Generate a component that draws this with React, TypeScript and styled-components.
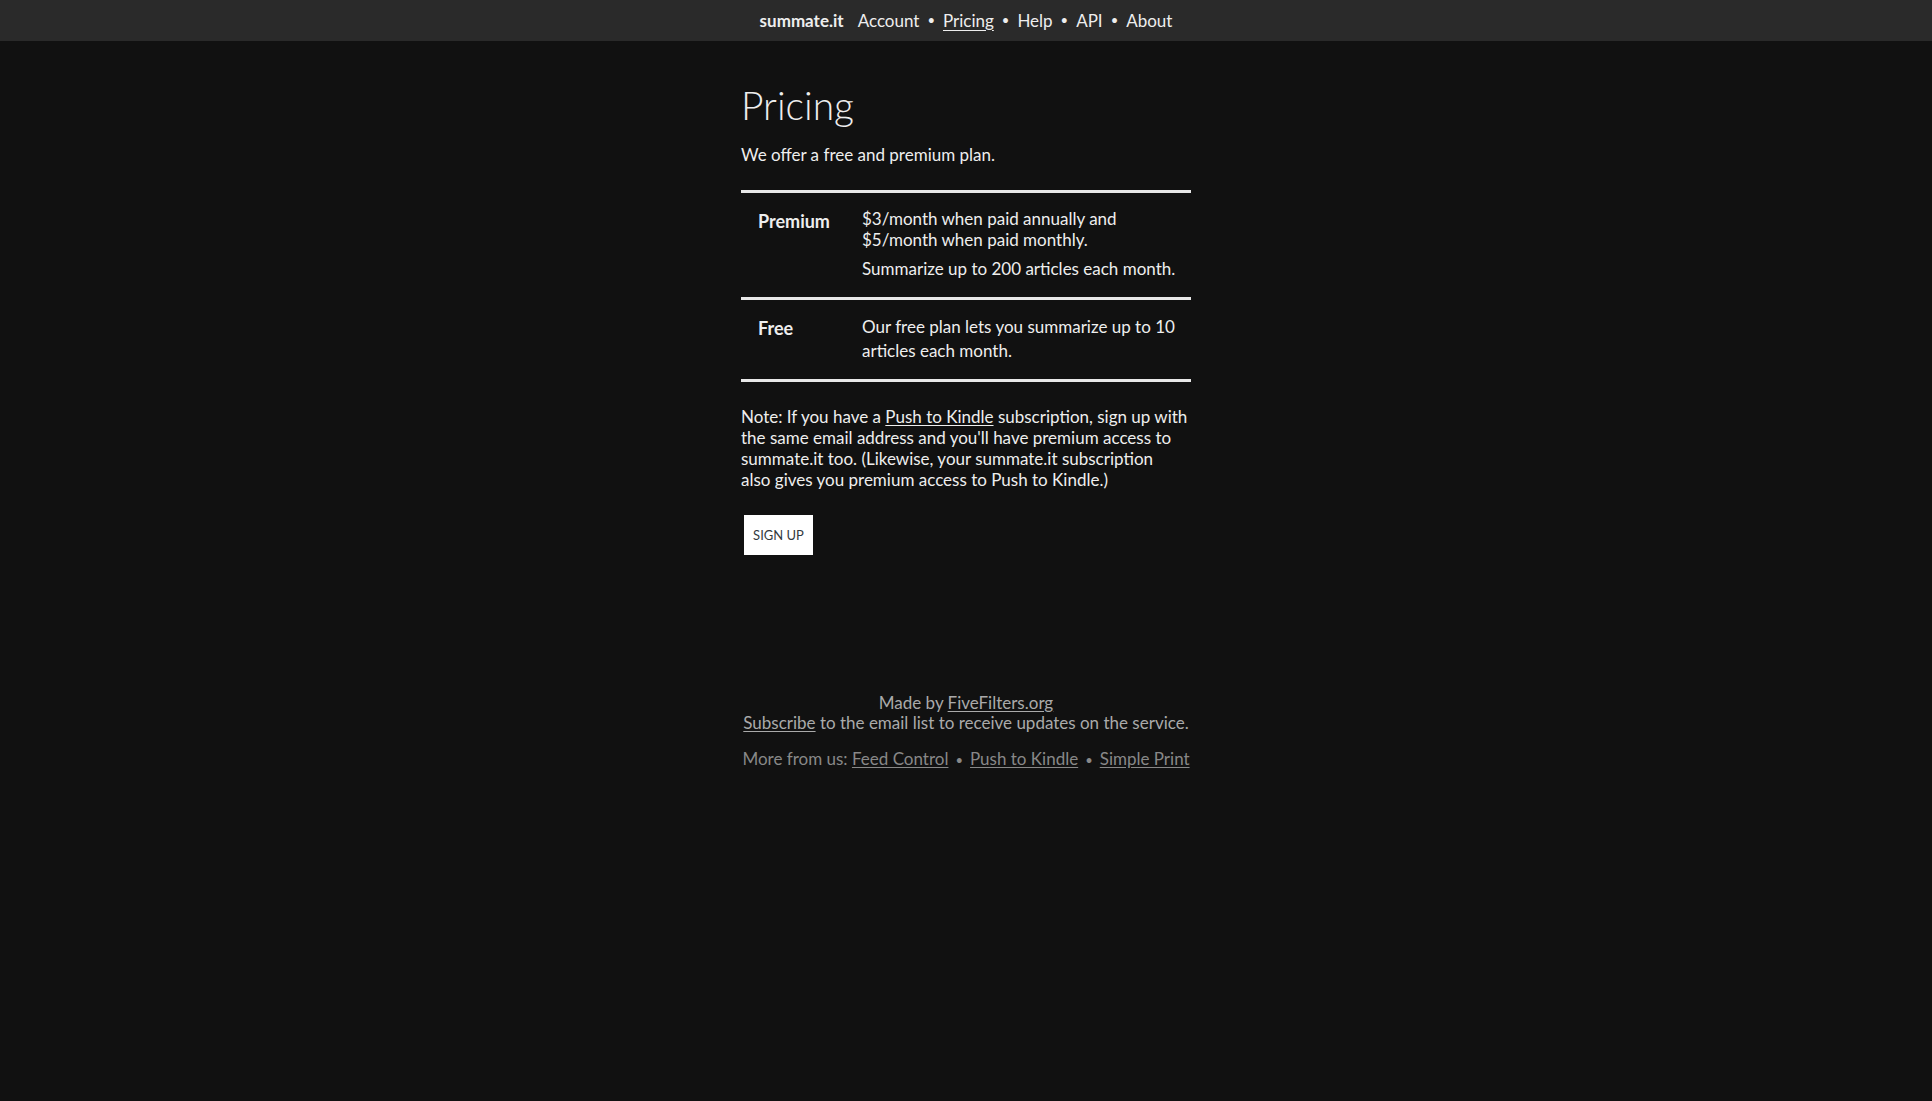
import React from 'react'
import styled, { createGlobalStyle } from 'styled-components'

const font = `"Lato", "Noto Sans", "Liberation Sans", sans-serif`

const GlobalStyle = createGlobalStyle`
  html, body {
    margin: 0;
    padding: 0;
    background: #111111;
  }
  body {
    font-family: ${font};
    color: #eeeeee;
    font-size: 17px;
  }
`

const NavBar = styled.nav`
  height: 41px;
  background: #2a2a2a;
  display: flex;
  align-items: center;
  justify-content: center;
  padding-bottom: 1px;
  box-sizing: border-box;
  font-size: 17px;
  color: #eeeeee;
`

const Brand = styled.a`
  font-weight: 700;
  color: #eeeeee;
  text-decoration: none;
  margin-right: 14px;
`

const NavLink = styled.a<{ $active?: boolean }>`
  color: #eeeeee;
  text-decoration: ${(p) => (p.$active ? 'underline' : 'none')};
  text-underline-offset: 3px;
`

const Dot = styled.span`
  margin: 0 8px;
  font-size: 13px;
`

const Main = styled.main`
  width: 450px;
  margin: 0 auto;
  padding-top: 39px;
`

const Title = styled.h1`
  font-weight: 300;
  font-size: 39px;
  line-height: 50px;
  margin: 0 0 13px 0;
`

const Intro = styled.p`
  margin: 0 0 23px 0;
  line-height: 24px;
`

const PlanTable = styled.table`
  width: 100%;
  border-collapse: collapse;
  border-bottom: 3px solid #e8e8e8;
`

const PlanRow = styled.tr`
  border-top: 3px solid #e8e8e8;
`

const PlanName = styled.th`
  width: 104px;
  text-align: left;
  vertical-align: top;
  padding: 16px 0 16px 17px;
  font-size: 18px;
  font-weight: 700;
  line-height: 24px;
`

const PlanDetails = styled.td`
  vertical-align: top;
  padding: 15px 0 16px 0;
`

const DetailText = styled.p<{ $tight?: boolean }>`
  margin: 0;
  line-height: ${(p) => (p.$tight ? '21px' : '24px')};
  & + & {
    margin-top: 7px;
  }
`

const Note = styled.p`
  margin: 24px 0 25px 0;
  line-height: 21px;
`

const TextLink = styled.a`
  color: inherit;
  text-decoration: underline;
  text-underline-offset: 2px;
`

const SignUpButton = styled.button`
  margin-left: 3px;
  width: 69px;
  height: 40px;
  background: #ffffff;
  border: none;
  border-radius: 0;
  color: #333a40;
  font-family: ${font};
  font-size: 13px;
  cursor: pointer;
`

const Footer = styled.footer`
  width: 500px;
  margin: 138px auto 0;
  text-align: center;
  color: #aaaaaa;
`

const FooterLine = styled.p`
  margin: 0;
  line-height: 20px;
`

const MoreFrom = styled.p`
  margin: 14px 0 0 0;
  line-height: 24px;
  color: #888888;
`

const FooterDot = styled.span`
  margin: 0 7px;
  font-size: 13px;
`

const navItems = [
  { label: 'Account' },
  { label: 'Pricing', active: true },
  { label: 'Help' },
  { label: 'API' },
  { label: 'About' },
]

const App = () => {
  return (
    <>
      <GlobalStyle />
      <NavBar>
        <Brand href="#">summate.it</Brand>
        {navItems.map((item, i) => (
          <React.Fragment key={item.label}>
            {i > 0 && <Dot>•</Dot>}
            <NavLink href="#" $active={item.active}>{item.label}</NavLink>
          </React.Fragment>
        ))}
      </NavBar>
      <Main>
        <Title>Pricing</Title>
        <Intro>We offer a free and premium plan.</Intro>
        <PlanTable>
          <tbody>
            <PlanRow>
              <PlanName>Premium</PlanName>
              <PlanDetails>
                <DetailText $tight>$3/month when paid annually and<br />$5/month when paid monthly.</DetailText>
                <DetailText>Summarize up to 200 articles each month.</DetailText>
              </PlanDetails>
            </PlanRow>
            <PlanRow>
              <PlanName>Free</PlanName>
              <PlanDetails>
                <DetailText>Our free plan lets you summarize up to 10 articles each month.</DetailText>
              </PlanDetails>
            </PlanRow>
          </tbody>
        </PlanTable>
        <Note>
          Note: If you have a <TextLink href="#">Push to Kindle</TextLink> subscription, sign up with the same
          email address and you'll have premium access to summate.it too. (Likewise, your summate.it
          subscription<br />also gives you premium access to Push to Kindle.)
        </Note>
        <SignUpButton>SIGN UP</SignUpButton>
      </Main>
      <Footer>
        <FooterLine>
          Made by <TextLink href="#">FiveFilters.org</TextLink>
        </FooterLine>
        <FooterLine>
          <TextLink href="#">Subscribe</TextLink> to the email list to receive updates on the service.
        </FooterLine>
        <MoreFrom>
          More from us: <TextLink href="#">Feed Control</TextLink>
          <FooterDot>•</FooterDot>
          <TextLink href="#">Push to Kindle</TextLink>
          <FooterDot>•</FooterDot>
          <TextLink href="#">Simple Print</TextLink>
        </MoreFrom>
      </Footer>
    </>
  )
}

export default App
